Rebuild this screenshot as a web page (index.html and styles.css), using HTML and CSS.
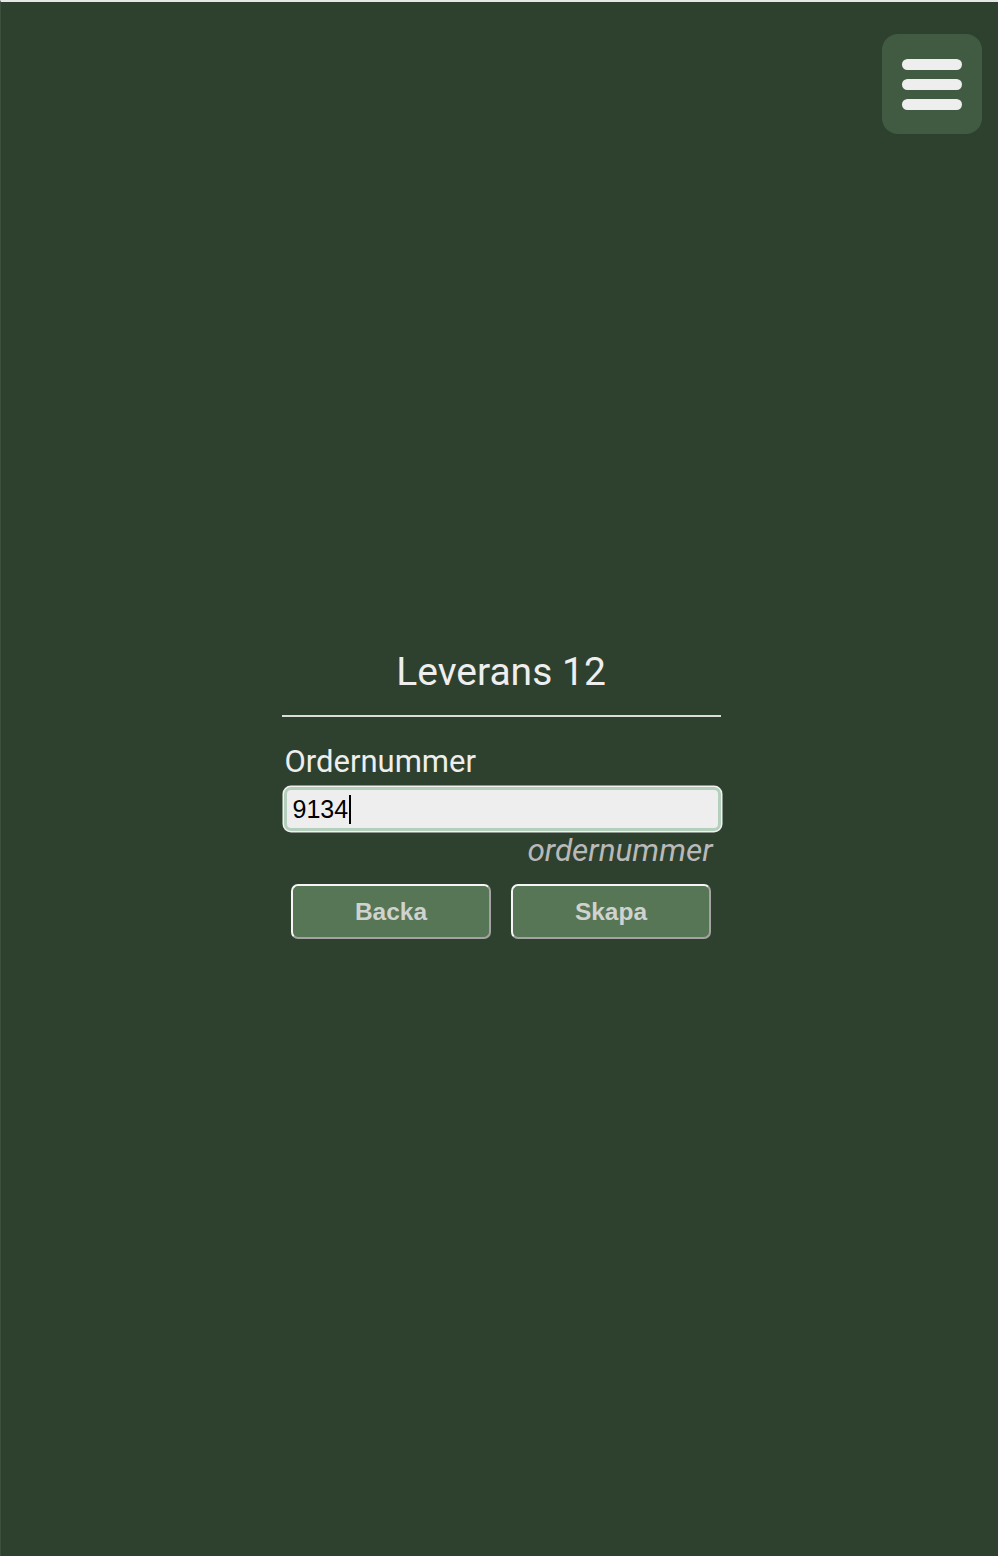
FILE: index.html
```html
<!DOCTYPE html>
<html lang="sv">
<head>
<meta charset="utf-8">
<title>Leverans 12</title>
<link rel="stylesheet" href="styles.css">
</head>
<body>
<div class="page">
  <header class="topbar">
    <button class="menu" aria-label="Meny">
      <span class="bar"></span><span class="bar"></span><span class="bar"></span>
    </button>
  </header>
  <main class="content">
    <section class="card">
      <h1 class="title">Leverans 12</h1>
      <hr class="rule">
      <label class="label" for="order">Ordernummer</label>
      <div class="field"><span class="value">9134</span><span class="caret"></span></div>
      <div class="hint">ordernummer</div>
      <div class="actions">
        <button class="btn">Backa</button>
        <button class="btn">Skapa</button>
      </div>
    </section>
  </main>
</div>
</body>
</html>
```

FILE: styles.css
```css
html, body {
  margin: 0;
  padding: 0;
  height: 100%;
  background: #2e412f;
}
.page {
  box-sizing: border-box;
  height: 1556px;
  border-top: 2px solid #e6e6e6;
  border-left: 1px solid #3c4f3d;
  background: #2e412f;
  font-family: Roboto, "Liberation Sans", sans-serif;
  display: flex;
  flex-direction: column;
}
.topbar {
  display: flex;
  justify-content: flex-end;
  padding: 32px 16px 0 0;
}
.menu {
  width: 100px;
  height: 100px;
  border: none;
  border-radius: 16px;
  background: #405b41;
  padding: 0;
  display: flex;
  flex-direction: column;
  align-items: center;
  justify-content: center;
  gap: 9px;
}
.bar {
  display: block;
  width: 60px;
  height: 11px;
  border-radius: 6px;
  background: #eeeeee;
}
.content {
  display: flex;
  justify-content: center;
  padding-top: 516px;
}
.card {
  width: 439px;
  display: flex;
  flex-direction: column;
  margin-left: 3px;
}
.title {
  margin: 0;
  text-align: center;
  font-weight: 400;
  font-size: 39px;
  line-height: 44px;
  color: #eeeeee;
}
.rule {
  margin: 21px 0 0 0;
  border: none;
  height: 2px;
  background: #dcdcdc;
}
.label {
  margin: 27px 0 0 3px;
  font-size: 31px;
  line-height: 36px;
  color: #eeeeee;
}
.field {
  box-sizing: border-box;
  margin: 7px 0 0 2px;
  height: 44px;
  border: 3px solid #b5cfbd;
  border-radius: 7px;
  box-shadow: 0 0 0 1.5px #f2f2f2;
  background: #eeeeee;
  display: flex;
  align-items: center;
  padding-left: 6px;
  font-family: "Liberation Sans", Arial, sans-serif;
  font-size: 25px;
  color: #000;
}
.caret {
  display: inline-block;
  width: 2px;
  height: 29px;
  background: #000;
  margin-left: 1px;
}
.hint {
  margin: 2px 8px 0 0;
  text-align: right;
  font-style: italic;
  font-size: 31.5px;
  line-height: 36px;
  color: #b9b9b9;
}
.actions {
  display: flex;
  justify-content: center;
  gap: 20px;
  margin: 15px 0 0 0;
}
.btn {
  box-sizing: border-box;
  width: 200px;
  height: 55px;
  border: 2px solid;
  border-color: #f6f6f6 #a3a3a3 #a3a3a3 #f6f6f6;
  border-radius: 7px;
  background: #567655;
  color: #cfd2cf;
  font-family: "Liberation Sans", Arial, sans-serif;
  font-weight: 700;
  font-size: 24.5px;
  padding: 0;
}
```
